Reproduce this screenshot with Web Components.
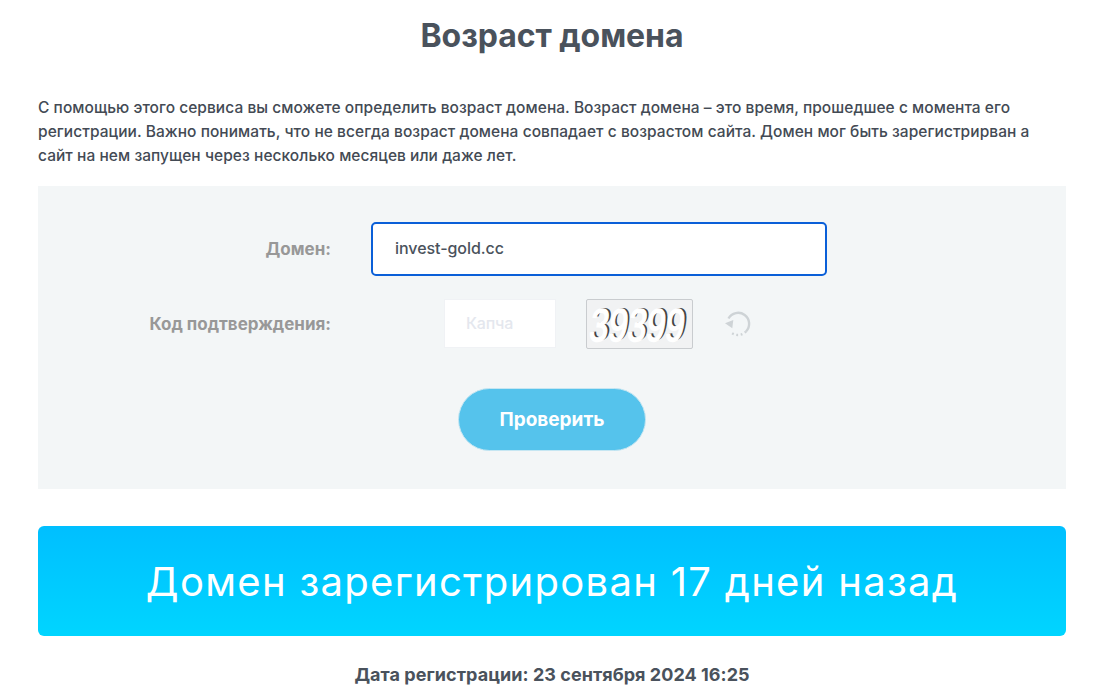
<!DOCTYPE html>
<html lang="ru">
<head>
<meta charset="utf-8">
<title>Возраст домена</title>
<style>
  html, body { margin: 0; padding: 0; background: #fff; }
  body { font-family: "Inter", "Noto Sans", "Liberation Sans", sans-serif; overflow: hidden; height: 697px; }
</style>
</head>
<body>
<domain-age-page>
  <span slot="title">Возраст домена</span>
  <span slot="intro">С помощью этого сервиса вы сможете определить возраст домена. Возраст домена – это время, прошедшее с момента его регистрации. Важно понимать, что не всегда возраст домена совпадает с возрастом сайта. Домен мог быть зарегистрирван а сайт на нем запущен через несколько месяцев или даже лет.</span>
  <check-form slot="form"></check-form>
  <result-banner slot="result">Домен зарегистрирован 17 дней назад</result-banner>
  <span slot="date">Дата регистрации: 23 сентября 2024 16:25</span>
</domain-age-page>

<script>
class DomainAgePage extends HTMLElement {
  connectedCallback() {
    this.attachShadow({ mode: 'open' });
    this.shadowRoot.innerHTML = `
      <style>
        :host { display: block; padding: 0 36px 0 38px; color: #4a525c; }
        h1 {
          margin: 0;
          padding-top: 15px;
          height: 84px;
          box-sizing: border-box;
          font: 700 32px/42px "Inter", sans-serif;
          letter-spacing: -0.05px;
          text-align: center;
        }
        p {
          margin: 0 0 18px;
          height: 84px;
          padding-top: 12px;
          box-sizing: border-box;
          font: 500 15.5px/24px "Inter", sans-serif;
          letter-spacing: 0.05px;
          color: #434a54;
        }
        .date {
          margin-top: 25px;
          text-align: center;
          font: 700 18px/28px "Inter", sans-serif;
          letter-spacing: 0.05px;
          color: #4a525c;
        }
      </style>
      <h1><slot name="title"></slot></h1>
      <p><slot name="intro"></slot></p>
      <slot name="form"></slot>
      <slot name="result"></slot>
      <div class="date"><slot name="date"></slot></div>
    `;
  }
}

class CheckForm extends HTMLElement {
  connectedCallback() {
    this.attachShadow({ mode: 'open' });
    this.shadowRoot.innerHTML = `
      <style>
        :host { display: block; background: #f3f6f7; height: 303px; box-sizing: border-box; padding-top: 36px; }
        .row { display: flex; align-items: center; }
        .label {
          width: 293px;
          text-align: right;
          font: 700 17px/24px "Inter", sans-serif;
          color: #989898;
        }
        .domain {
          margin-left: 40px;
          width: 456px;
          height: 54px;
          box-sizing: border-box;
          border: 2px solid #0a5fd8;
          border-radius: 5px;
          background: #fff;
          padding: 0 22px;
          font: 500 16px/48px "Inter", sans-serif;
          letter-spacing: -0.05px;
          color: #4a525c;
        }
        .captcha-row { margin-top: 23px; }
        .captcha-input {
          align-self: flex-start;
          margin-left: 113px;
          width: 112px;
          height: 49px;
          box-sizing: border-box;
          background: #fff;
          border: 1px solid #f0f2f5;
          padding-left: 21px;
          font: 500 16px/46px "Inter", sans-serif;
          letter-spacing: -0.2px;
          color: #e4e7ee;
        }
        .captcha {
          position: relative;
          margin-left: 30px;
          width: 107px;
          height: 50px;
          box-sizing: border-box;
          border: 1px solid #c9cccf;
          border-radius: 2px;
          background: #f1f2f3;
          overflow: hidden;
          font: 400 46px/48px "Liberation Sans", sans-serif;
          color: #444;
          text-align: center;
          white-space: nowrap;
        }
        .captcha span {
          position: absolute;
          left: 50%;
          top: 0;
          transform: translateX(-50%) skewX(-8deg) scaleX(0.74);
        }
        /* white copy on top leaves only a thin sliver of each digit */
        .captcha span::after {
          content: "39399";
          position: absolute;
          left: -3px;
          top: 1px;
          color: #fff;
          -webkit-text-stroke: 1.5px #fff;
        }
        .refresh { margin-left: 30px; width: 30px; height: 30px; display: block; }
        .btn-wrap { display: flex; justify-content: center; margin-top: 39px; }
        .btn {
          width: 188px;
          height: 63px;
          box-sizing: border-box;
          border: 1px solid #c5e6f2;
          border-radius: 32px;
          background: #55c3ec;
          color: #fff;
          text-align: center;
          font: 700 19px/61px "Inter", sans-serif;
        }
      </style>
      <div class="row">
        <div class="label">Домен:</div>
        <div class="domain">invest-gold.cc</div>
      </div>
      <div class="row captcha-row">
        <div class="label">Код подтверждения:</div>
        <div class="captcha-input">Капча</div>
        <div class="captcha"><span>39399</span></div>
        <svg class="refresh" viewBox="0 0 30 30" fill="none" stroke="#ced3d6" stroke-width="2.4">
          <path d="M5.5 9.5A11 11 0 1 1 23 22.5"/>
          <path d="M23 22.5A11 11 0 0 1 7.5 23" stroke-dasharray="1.8 2.6"/>
          <path d="M2 14.3L10.3 11L9.3 19.3z" fill="#ced3d6" stroke="none"/>
        </svg>
      </div>
      <div class="btn-wrap"><div class="btn">Проверить</div></div>
    `;
  }
}

class ResultBanner extends HTMLElement {
  connectedCallback() {
    this.attachShadow({ mode: 'open' });
    this.shadowRoot.innerHTML = `
      <style>
        :host {
          display: flex;
          align-items: center;
          justify-content: center;
          box-sizing: border-box;
          margin-top: 37px;
          padding-top: 2px;
          height: 110px;
          border-radius: 6px;
          background: linear-gradient(180deg, #00bfff, #00d5ff);
          color: #fff;
          font: 400 40px/50px "Inter", sans-serif;
          letter-spacing: 1.3px;
        }
      </style>
      <slot></slot>
    `;
  }
}

customElements.define('domain-age-page', DomainAgePage);
customElements.define('check-form', CheckForm);
customElements.define('result-banner', ResultBanner);
</script>
</body>
</html>
